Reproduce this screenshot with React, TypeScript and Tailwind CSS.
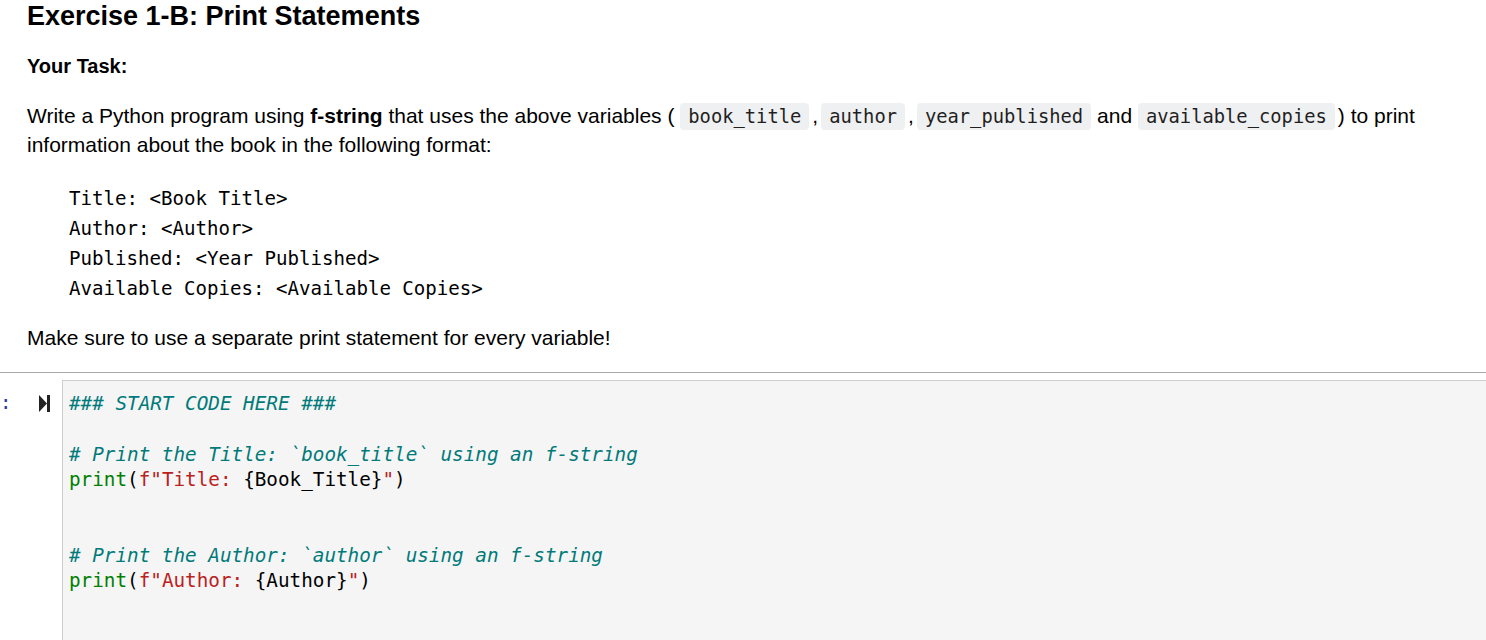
const sans = { fontFamily: '"Liberation Sans", Arial, sans-serif' };

const Code = ({ children }: { children: string }) => (
  <code className="rounded-[4px] bg-[#eff0f1] px-[8px] py-[3px] font-['DejaVu_Sans_Mono',monospace] text-[18.8px] leading-[20px] text-[#1f1f1f]">
    {children}
  </code>
);

const Comma = () => <span className="px-[3px]">,</span>;

const Comment = ({ children }: { children: string }) => (
  <span className="italic text-[#007a7a]">{children}</span>
);

const PrintLine = ({ label, name }: { label: string; name: string }) => (
  <div>
    <span className="text-[#008000]">print</span>
    <span>(</span>
    <span className="text-[#ba2121]">f"{label}: </span>
    <span>{`{${name}}`}</span>
    <span className="text-[#ba2121]">"</span>
    <span>)</span>
  </div>
);

const RunIcon = () => (
  <svg width="11" height="17" viewBox="0 0 11 17" className="block">
    <path d="M0 0 L8 8.5 L0 17 Z" fill="#222" />
    <rect x="8" y="0" width="3" height="17" fill="#222" />
  </svg>
);

export default function App() {
  return (
    <div className="h-[640px] w-[1486px] overflow-hidden bg-white text-black" style={sans}>
      <div className="pl-[27px] pr-[40px]">
        <h2 className="text-[27px] leading-[32px] font-bold">Exercise 1-B: Print Statements</h2>
        <p className="mt-[20px] text-[20px] leading-[28px] font-bold">Your Task:</p>
        <p className="mt-[21px] text-[21px] leading-[29px]">
          Write a Python program using <b>f-string</b> that uses the above variables ({' '}
          <Code>book_title</Code>
          <Comma />
          <Code>author</Code>
          <Comma />
          <Code>year_published</Code> and <Code>available_copies</Code>
          <span className="pl-[3px]">)</span> to print information about the book in the following format:
        </p>
        <pre className="mt-[25px] pl-[42px] font-['DejaVu_Sans_Mono',monospace] text-[19.1px] leading-[30px]">
          {`Title: <Book Title>
Author: <Author>
Published: <Year Published>
Available Copies: <Available Copies>`}
        </pre>
        <p className="mt-[19px] text-[21px] leading-[29px]">
          Make sure to use a separate print statement for every variable!
        </p>
      </div>

      <div className="mt-[20px] h-px bg-[#a9a9a9]" />

      <div className="mt-[7px] flex">
        <div className="flex w-[62px] shrink-0 pt-[10px]">
          <span className="w-[39px] font-['DejaVu_Sans_Mono',monospace] text-[19px] leading-[25px] text-[#303f9f]">
            :
          </span>
          <div className="pt-[5px]">
            <RunIcon />
          </div>
        </div>
        <div className="h-[300px] flex-1 border-t border-l border-[#cfcfcf] bg-[#f5f5f5] pt-[10px] pl-[6px] font-['DejaVu_Sans_Mono',monospace] text-[19.3px] leading-[25.3px] whitespace-pre text-black">
          <div>
            <Comment>### START CODE HERE ###</Comment>
          </div>
          <div>&nbsp;</div>
          <div>
            <Comment>{'# Print the Title: `book_title` using an f-string'}</Comment>
          </div>
          <PrintLine label="Title" name="Book_Title" />
          <div>&nbsp;</div>
          <div>&nbsp;</div>
          <div>
            <Comment>{'# Print the Author: `author` using an f-string'}</Comment>
          </div>
          <PrintLine label="Author" name="Author" />
        </div>
      </div>
    </div>
  );
}
